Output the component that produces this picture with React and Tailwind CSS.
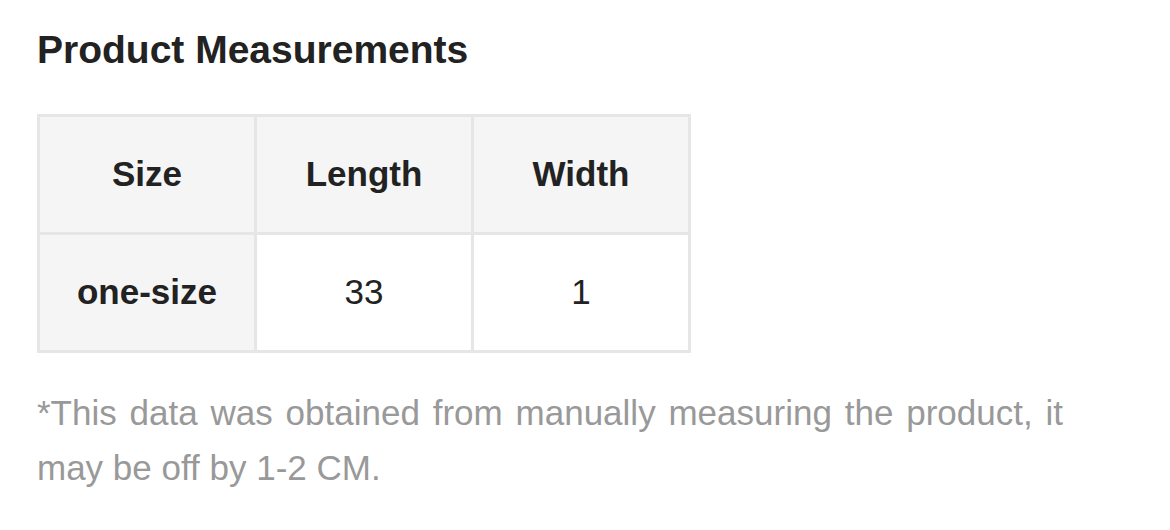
import React from 'react';

const rows = [
  { size: 'one-size', length: '33', width: '1' },
];

export default function App() {
  return (
    <div className="w-[1170px] h-[530px] bg-white px-[37px] pt-[27px] font-['Liberation_Sans',Arial,sans-serif]">
      <h2 className="text-[39px] leading-[45px] font-bold text-[#222]">Product Measurements</h2>

      {/* size table */}
      <div className="mt-[42px] w-[654px] grid grid-cols-3 gap-[3px] p-[3px] bg-[#e6e6e6] text-[35px] text-[#222]">
        <div className="h-[115px] flex items-center justify-center bg-[#f5f5f5] font-bold">Size</div>
        <div className="h-[115px] flex items-center justify-center bg-[#f5f5f5] font-bold">Length</div>
        <div className="h-[115px] flex items-center justify-center bg-[#f5f5f5] font-bold">Width</div>
        {rows.map((r) => (
          <React.Fragment key={r.size}>
            <div className="h-[115px] flex items-center justify-center bg-[#f5f5f5] font-bold">{r.size}</div>
            <div className="h-[115px] flex items-center justify-center bg-white">{r.length}</div>
            <div className="h-[115px] flex items-center justify-center bg-white">{r.width}</div>
          </React.Fragment>
        ))}
      </div>

      <p className="mt-[32px] w-[1026px] text-justify text-[35px] leading-[55px] text-[#999]">
        *This data was obtained from manually measuring the product, it may be off by 1-2 CM.
      </p>
    </div>
  );
}
